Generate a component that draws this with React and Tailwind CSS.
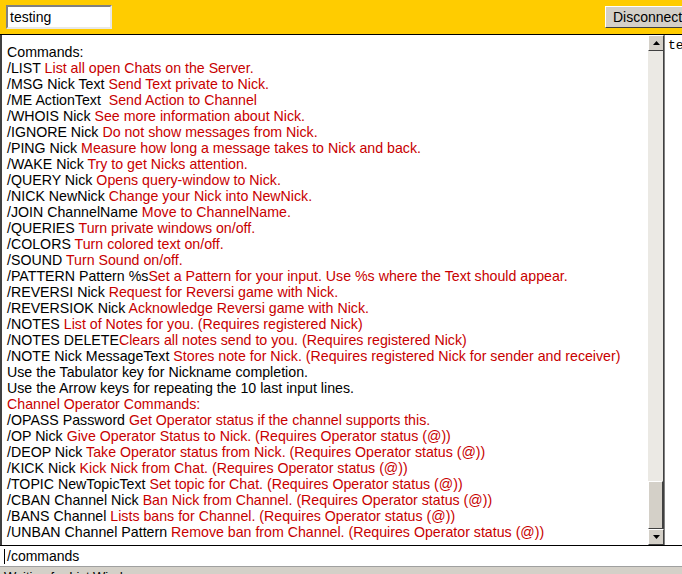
import React from "react";

const lines = [
  ["Commands:", ""],
  ["/LIST ", "List all open Chats on the Server."],
  ["/MSG Nick Text ", "Send Text private to Nick."],
  ["/ME ActionText  ", "Send Action to Channel"],
  ["/WHOIS Nick ", "See more information about Nick."],
  ["/IGNORE Nick ", "Do not show messages from Nick."],
  ["/PING Nick ", "Measure how long a message takes to Nick and back."],
  ["/WAKE Nick ", "Try to get Nicks attention."],
  ["/QUERY Nick ", "Opens query-window to Nick."],
  ["/NICK NewNick ", "Change your Nick into NewNick."],
  ["/JOIN ChannelName ", "Move to ChannelName."],
  ["/QUERIES ", "Turn private windows on/off."],
  ["/COLORS ", "Turn colored text on/off."],
  ["/SOUND ", "Turn Sound on/off."],
  ["/PATTERN Pattern %s", "Set a Pattern for your input. Use %s where the Text should appear."],
  ["/REVERSI Nick ", "Request for Reversi game with Nick."],
  ["/REVERSIOK Nick ", "Acknowledge Reversi game with Nick."],
  ["/NOTES ", "List of Notes for you. (Requires registered Nick)"],
  ["/NOTES DELETE", "Clears all notes send to you. (Requires registered Nick)"],
  ["/NOTE Nick MessageText ", "Stores note for Nick. (Requires registered Nick for sender and receiver)"],
  ["Use the Tabulator key for Nickname completion.", ""],
  ["Use the Arrow keys for repeating the 10 last input lines.", ""],
  ["", "Channel Operator Commands:"],
  ["/OPASS Password ", "Get Operator status if the channel supports this."],
  ["/OP Nick ", "Give Operator Status to Nick. (Requires Operator status (@))"],
  ["/DEOP Nick ", "Take Operator status from Nick. (Requires Operator status (@))"],
  ["/KICK Nick ", "Kick Nick from Chat. (Requires Operator status (@))"],
  ["/TOPIC NewTopicText ", "Set topic for Chat. (Requires Operator status (@))"],
  ["/CBAN Channel Nick ", "Ban Nick from Channel. (Requires Operator status (@))"],
  ["/BANS Channel ", "Lists bans for Channel. (Requires Operator status (@))"],
  ["/UNBAN Channel Pattern ", "Remove ban from Channel. (Requires Operator status (@))"],
];

function Arrow({ up }) {
  return (
    <div className="w-[16px] h-[16px] bg-[#d4d0c8] border border-t-white border-l-white border-r-[#404040] border-b-[#404040] flex items-center justify-center shrink-0">
      <svg width="7" height="4" viewBox="0 0 7 4">
        {up ? <path d="M3.5 0 L7 4 L0 4 Z" fill="#000" /> : <path d="M0 0 L7 0 L3.5 4 Z" fill="#000" />}
      </svg>
    </div>
  );
}

export default function App() {
  return (
    <div className="w-[682px] h-[574px] overflow-hidden flex flex-col bg-[#d4d0c8] font-['Liberation_Sans',Arial,sans-serif] text-[14px] text-black">
      <div className="h-[34px] shrink-0 bg-[#ffcc00] flex items-center justify-between">
        <div className="ml-[6px] w-[106px] h-[24px] bg-white border-2 border-t-[#808080] border-l-[#808080] border-r-[#e8e8e8] border-b-[#e8e8e8] flex items-center pl-[2px] text-[14px] leading-none">
          testing
        </div>
        <div className="w-[80px] h-[22px] mr-[-3px] bg-[#d4d0c8] border border-t-white border-l-white border-r-[#404040] border-b-[#404040] flex items-center pl-[7px] text-[14px] leading-none whitespace-nowrap">
          Disconnect
        </div>
      </div>
      <div className="flex h-[511px] shrink-0 border-t border-[#000]">
        <div className="flex flex-1 border-l-2 border-l-[#404040] bg-white">
          <div className="flex-1 pt-[9px] pl-[5px] text-[14.2px] leading-[16px] whitespace-nowrap overflow-hidden">
            {lines.map(([a, b], i) => (
              <div key={i} className="h-[16px] whitespace-pre">
                {a}
                <span className="text-[#c80000]">{b}</span>
              </div>
            ))}
          </div>
          <div className="w-[16px] flex flex-col bg-[#ebe9e4] border-r border-[#404040]">
            <Arrow up />
            <div className="flex-1 flex flex-col justify-end">
              <div className="h-[48px] bg-[#d4d0c8] border border-t-white border-l-white border-r-[#404040] border-b-[#404040]" />
            </div>
            <Arrow />
          </div>
        </div>
        <div className="w-[18px] bg-white border-l border-[#808080] pl-[3px] pt-[3px] font-['Liberation_Mono',monospace] text-[13px] leading-[16px] overflow-hidden">
          te
        </div>
      </div>
      <div className="h-[21px] shrink-0 bg-white border-t border-[#000] flex items-center pl-[7px] relative text-[14px] leading-none">
        <span className="absolute left-[4px] top-[3px] w-px h-[15px] bg-black" />
        /commands
      </div>
      <div className="flex-1 border-t border-[#a0a0a0] pl-[4px] pt-[2px] text-[13px] leading-[16px] whitespace-nowrap">
        Waiting for List Window
      </div>
    </div>
  );
}
